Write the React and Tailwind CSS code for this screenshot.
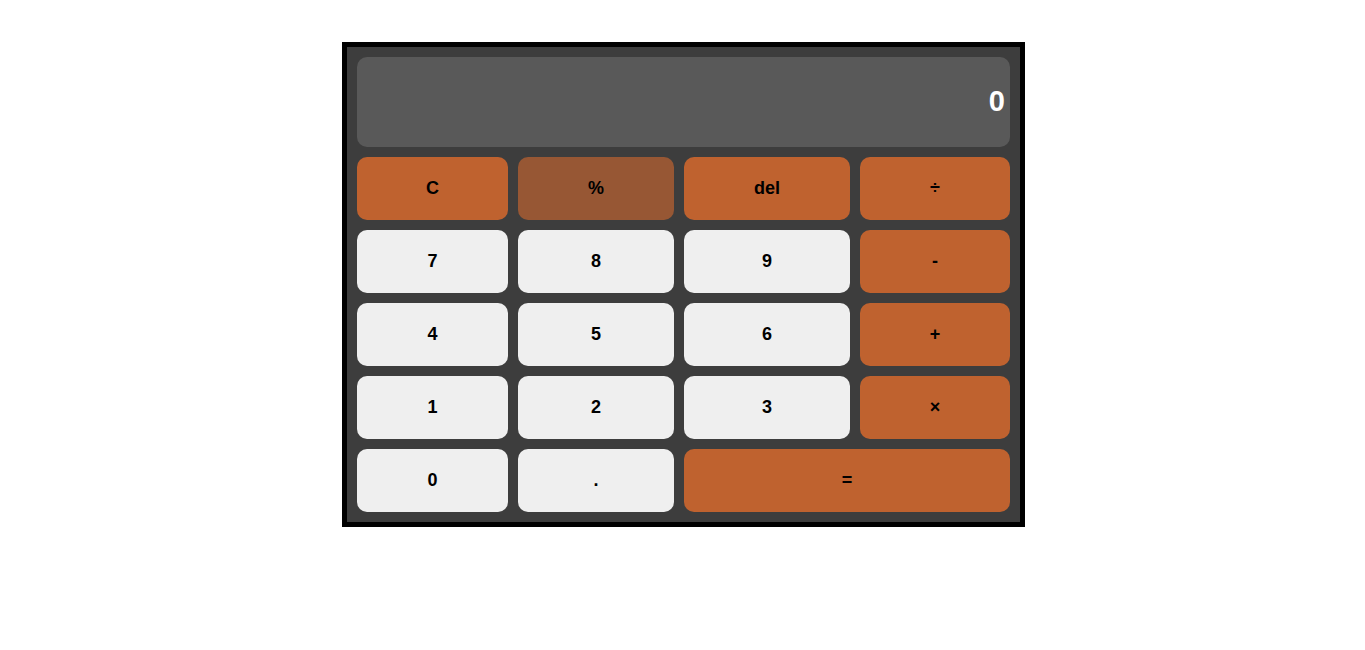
const keys = [
  { label: "C", kind: "op" },
  { label: "%", kind: "dim" },
  { label: "del", kind: "op" },
  { label: "÷", kind: "op" },
  { label: "7", kind: "num" },
  { label: "8", kind: "num" },
  { label: "9", kind: "num" },
  { label: "-", kind: "op" },
  { label: "4", kind: "num" },
  { label: "5", kind: "num" },
  { label: "6", kind: "num" },
  { label: "+", kind: "op" },
  { label: "1", kind: "num" },
  { label: "2", kind: "num" },
  { label: "3", kind: "num" },
  { label: "×", kind: "op" },
  { label: "0", kind: "num" },
  { label: ".", kind: "num" },
  { label: "=", kind: "op", wide: true },
];

const styles = {
  op: "bg-[#bf622f]",
  dim: "bg-[#975734]",
  num: "bg-[#efefef]",
};

export default function App() {
  return (
    <div className="min-h-screen bg-white pt-[42px] font-['Liberation_Sans',Arial,sans-serif]">
      <div className="ml-[342px] w-[683px] border-[5px] border-black bg-[#3d3d3d] p-[10px]">
        {/* Display */}
        <div className="flex h-[90px] items-center justify-end rounded-[10px] bg-[#595959] pr-[5px]">
          <span className="text-[29px] font-bold text-white">0</span>
        </div>

        {/* Keypad */}
        <div className="mt-[10px] grid grid-cols-[151px_156px_166px_150px] gap-[10px]">
          {keys.map((k) => (
            <button
              key={k.label}
              className={
                "flex h-[63px] items-center justify-center rounded-[10px] text-[18px] font-bold text-black " +
                styles[k.kind] +
                (k.wide ? " col-span-2" : "")
              }
            >
              {k.label}
            </button>
          ))}
        </div>
      </div>
    </div>
  );
}
